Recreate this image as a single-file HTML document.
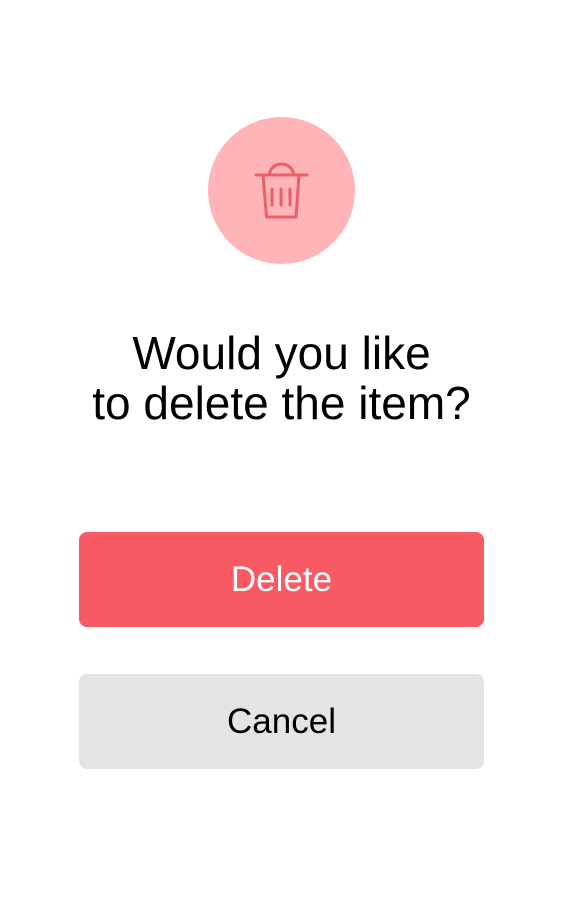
<!DOCTYPE html><html><head><style>
body{margin:0;width:563px;height:912px;background:#fff;font-family:"Liberation Sans",sans-serif;position:relative}
.c{position:absolute;left:208px;top:117px;width:147px;height:147px;border-radius:50%;background:#ffb5b7}
h1{position:absolute;top:328px;left:0;width:563px;margin:0;text-align:center;font-weight:normal;font-size:46px;line-height:50px;color:#000}
.b{position:absolute;left:79px;width:405px;height:95px;border-radius:8px;text-align:center;line-height:95px;font-size:35px}
</style></head><body>
<div class="c"></div>
<svg style="position:absolute;left:0;top:0" width="563" height="300"><g fill="none" stroke="#ec5f67" stroke-width="3" stroke-linecap="round" stroke-linejoin="round">
<path d="M256 175H307"/><path d="M269.5 175A12 11 0 0 1 293.5 175"/><path d="M263 175L266.5 217H296L299 175"/><path d="M272 189V205M281 189V205M290 189V205"/></g></svg>
<h1>Would you like<br>to delete the item?</h1>
<div class="b" style="top:532px;background:#f85a63;color:#fff">Delete</div>
<div class="b" style="top:674px;background:#e4e4e4;color:#000">Cancel</div>
</body></html>
